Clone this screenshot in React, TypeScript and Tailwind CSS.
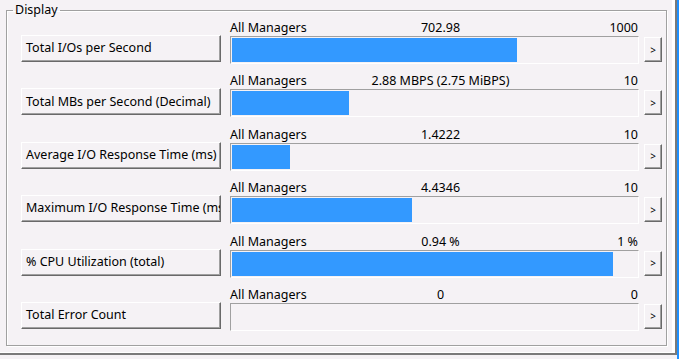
import type { CSSProperties } from 'react';

interface Metric {
  name: string;
  value: string;
  max: string;
  ratio: number;
}

const metrics: Metric[] = [
  { name: 'Total I/Os per Second', value: '702.98', max: '1000', ratio: 0.70298 },
  { name: 'Total MBs per Second (Decimal)', value: '2.88 MBPS (2.75 MiBPS)', max: '10', ratio: 0.288 },
  { name: 'Average I/O Response Time (ms)', value: '1.4222', max: '10', ratio: 0.14222 },
  { name: 'Maximum I/O Response Time (ms)', value: '4.4346', max: '10', ratio: 0.44346 },
  { name: '% CPU Utilization (total)', value: '0.94 %', max: '1 %', ratio: 0.94 },
  { name: 'Total Error Count', value: '0', max: '0', ratio: 0 },
];

const font: CSSProperties = { fontFamily: '"Noto Sans", "Liberation Sans", sans-serif' };

function MetricRow({ metric }: { metric: Metric }) {
  return (
    <div className="grid grid-cols-[200px_409px_18px] grid-rows-[16px_28px] gap-x-[9px] h-[44px]">
      <div />
      <div className="flex items-center text-[12.5px] leading-[16px] text-black whitespace-nowrap">
        <span className="w-[110px]">All Managers</span>
        <span className="flex-1 text-center pl-[12px]">{metric.value}</span>
        <span className="w-[110px] text-right pr-[1px]">{metric.max}</span>
      </div>
      <div />

      {/* metric selector button */}
      <button className="-mt-[1px] h-[27px] bg-[#f5f2f5] border-t border-l border-white border-r border-b border-r-[#696969] border-b-[#696969] shadow-[inset_-1px_-1px_0_#a0a0a0] text-left pl-[4px] text-[12.5px] text-black overflow-hidden whitespace-nowrap">
        {metric.name}
      </button>

      {/* bar */}
      <div className="h-[28px] border-t border-l border-[#a0a0a0] border-r border-b border-r-white border-b-white p-[1px]">
        <div className="h-full bg-[#3399ff]" style={{ width: `${metric.ratio * 100}%` }} />
      </div>

      <button className="-ml-[4px] mt-[1px] w-[18px] h-[25px] bg-[#f5f2f5] border-t border-l border-white border-r border-b border-r-[#696969] border-b-[#696969] shadow-[inset_-1px_-1px_0_#a0a0a0] text-[10px] leading-none text-black flex items-center justify-center">
        &gt;
      </button>
    </div>
  );
}

export default function App() {
  return (
    <div className="w-[679px] h-[359px] bg-[#f5f2f5] flex" style={font}>
      <div className="w-[677px] h-[355px] border-r-2 border-b-2 border-[#7a7a7a] shadow-[inset_-3px_-1px_0_#fff]">
        <fieldset className="ml-[6px] mt-[1px] w-[661px] h-[345px] border border-[#a0a0a0] shadow-[inset_1px_1px_0_#fff,1px_1px_0_#fff] pl-[14px] pt-[1px]">
          <legend className="-ml-[8px] px-[2px] text-[12.5px] leading-[18px] text-black">Display</legend>
          <div className="flex flex-col gap-[9.4px]">
            {metrics.map((m) => (
              <MetricRow key={m.name} metric={m} />
            ))}
          </div>
        </fieldset>
      </div>
      <div className="w-[2px] h-full bg-[#1e90ff]" />
    </div>
  );
}
